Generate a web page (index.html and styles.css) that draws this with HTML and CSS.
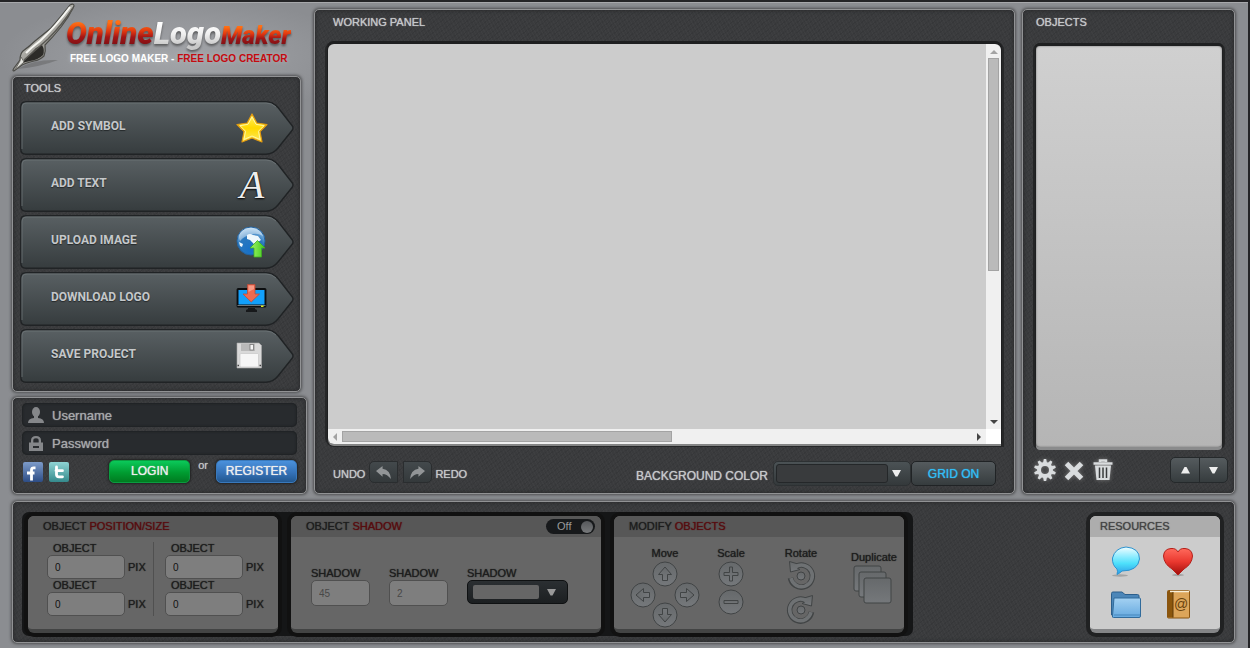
FILE: index.html
```html
<!DOCTYPE html>
<html lang="en">
<head>
<meta charset="utf-8">
<title>Online Logo Maker</title>
<link rel="stylesheet" href="styles.css">
</head>
<body>
<svg class="defs" width="0" height="0" aria-hidden="true">
  <defs>
    <linearGradient id="g-tool" x1="0" y1="0" x2="0" y2="1"><stop offset="0" stop-color="#596063"/><stop offset="1" stop-color="#363c3e"/></linearGradient>
    <linearGradient id="g-ball" x1="0" y1="0" x2="0" y2="1"><stop offset="0" stop-color="#66696b"/><stop offset="1" stop-color="#75787b"/></linearGradient>
    <symbol id="tool-shape" viewBox="0 0 274 54">
      <path d="M6 .7H246Q253 .7 258 6.500L272 24.500Q274 27 272 29.500L258 47Q253 53.200 246 53.200H6Q.8 53.200 .8 48V6Q.8 .7 6 .7Z" fill="url(#g-tool)" stroke="#202325" stroke-width="1.400"/>
      <path d="M2 48V7Q2 2 7 2H246Q252 2 256 6" fill="none" stroke="#6e7679" stroke-width=".8"/>
    </symbol>
  </defs>
</svg>
<div class="page">
  <main class="workspace">
    <div class="side">
      <header class="brand">
        <svg class="pen" viewBox="0 0 66 70" aria-hidden="true">
          <defs><linearGradient id="g-pen" x1="0" y1="0" x2=".8" y2="1"><stop offset="0" stop-color="#e8e8e4"/><stop offset=".5" stop-color="#b3b2ac"/><stop offset="1" stop-color="#5c5b57"/></linearGradient></defs>
          <path d="M5 66Q22 56 46 57Q28 64 5 66Z" fill="#555" opacity=".4"/>
          <path d="M58 2Q62 0 62 3Q57 14 49 24Q41 34 33 42Q34 48 32 53Q28 57 22 58Q14 60 10 62L2 68Q0 68 2 65L8 57Q8 51 11 48Q18 43 23 38Q33 30 39 25Q50 12 58 2Z" fill="url(#g-pen)" stroke="#4b4b47" stroke-width="1.200"/>
          <path d="M30 42Q33 47 31 52Q26 57 18 58Q12 59 9 61L24 45Z" fill="#2c2b28"/>
          <path d="M58 4Q45 22 28 38Q20 44 14 50" fill="none" stroke="#f6f6f2" stroke-width="2"/>
          <path d="M61 5Q50 22 36 36L12 57" fill="none" stroke="#5a5954" stroke-width="1.500"/>
          <path d="M9 54L12 59L3 67L8 58Z" fill="#e5e5e0" stroke="#55534d" stroke-width=".7"/>
        </svg>
        <div class="brand-text">
          <h1 class="logo"><span class="fire">Online</span><span class="silver">Logo</span><span class="fire small">Maker</span></h1>
          <p class="tagline">FREE LOGO MAKER - <span>FREE LOGO CREATOR</span></p>
        </div>
      </header>

      <section class="panel tools">
        <h2 class="title">TOOLS</h2>
        <nav class="tool-list">
          <button class="tool" type="button"><svg class="shape" preserveAspectRatio="none"><use href="#tool-shape"/></svg><span>ADD SYMBOL</span>
            <svg class="icon" viewBox="0 0 32 32"><defs><linearGradient id="g-star" x1="0" y1="0" x2="0" y2="1"><stop offset="0" stop-color="#fff36a"/><stop offset=".5" stop-color="#ffd900"/><stop offset="1" stop-color="#ffe95c"/></linearGradient></defs><path d="M16 2L20.800 11L31 12.500L24 19.500L26 30L16 26L6 30L8 19.500L1 12.500L11.200 11Z" fill="url(#g-star)" stroke="#e39b12" stroke-width="1.200" stroke-linejoin="round"/><path d="M16 5L20 12.300L28 13.700L22.500 19.200L24 27.500L16 24L8 27.500L9.500 19.200L4 13.700L12 12.300Z" fill="none" stroke="#fff7a5" stroke-width="1"/></svg></button>
          <button class="tool" type="button"><svg class="shape" preserveAspectRatio="none"><use href="#tool-shape"/></svg><span>ADD TEXT</span><b class="icon letter" aria-hidden="true">A</b></button>
          <button class="tool" type="button"><svg class="shape" preserveAspectRatio="none"><use href="#tool-shape"/></svg><span>UPLOAD IMAGE</span>
            <svg class="icon" viewBox="0 0 32 32"><defs><radialGradient id="g-globe" cx=".5" cy=".85" r=".9"><stop offset="0" stop-color="#1670c8"/><stop offset=".55" stop-color="#2a78be"/><stop offset="1" stop-color="#c4e2f7"/></radialGradient><linearGradient id="g-up" x1="0" y1="0" x2="1" y2="0"><stop offset="0" stop-color="#a3f56b"/><stop offset="1" stop-color="#3fc91b"/></linearGradient></defs><circle cx="15" cy="15" r="14" fill="url(#g-globe)" stroke="#2262a0"/><path d="M4 7Q9 1 17 2Q25 4 27 10Q20 6 14 9Q8 10 4 15Q2 11 4 7Z" fill="#fff" opacity=".4"/><path d="M11 9Q14 7 17 9L22 10L25 14L22 16L20 21L17 17L14 14L11 13ZM3 16L7 18L6 21L4 20Z" fill="#eef7fc"/><path d="M21.500 14.500L29 22H25.500V31H18V22H14Z" fill="url(#g-up)" stroke="#3fae22" stroke-width=".8"/></svg></button>
          <button class="tool" type="button"><svg class="shape" preserveAspectRatio="none"><use href="#tool-shape"/></svg><span>DOWNLOAD LOGO</span>
            <svg class="icon" viewBox="0 0 32 32"><rect x=".6" y="5" width="29.800" height="19.500" rx="1.500" fill="#0c0e10"/><rect x="2.500" y="7" width="26" height="14.500" fill="#12a0fb"/><path d="M1.500 22.500H29.500" stroke="#70777a"/><rect x="25" y="22.500" width="2.500" height="1.500" fill="#d8ef20"/><path d="M12 25H19V26L21 27V29H10V27L12 26Z" fill="#17191b"/><path d="M11.500 1.500H19V11H23.500L15.200 19L7 11H11.500Z" fill="#f06a50" stroke="#bc4d3a" stroke-width=".8"/><path d="M12.500 2.500H18V6L12.500 9Z" fill="#f89a86"/></svg></button>
          <button class="tool" type="button"><svg class="shape" preserveAspectRatio="none"><use href="#tool-shape"/></svg><span>SAVE PROJECT</span>
            <svg class="icon" viewBox="0 0 32 32"><path d="M1 3H23L25.500 5.500V28H1Z" fill="#d9d9d9" stroke="#a9a9a9" stroke-width=".6"/><rect x="5" y="3.500" width="14" height="7.500" fill="#b9b9b9"/><rect x="14" y="4.500" width="3.500" height="5.500" fill="#f4f4f4" stroke="#777" stroke-width=".8"/><rect x="4" y="13.500" width="18.500" height="13.500" rx="1" fill="#f6f6f6" stroke="#c2c2c2" stroke-width=".6"/><path d="M1.500 25.500H3M23.500 25.500H25" stroke="#444" stroke-width="1.500"/></svg></button>
        </nav>
      </section>

      <form class="panel login" onsubmit="return false">
        <label class="entry"><svg viewBox="0 0 16 17" aria-hidden="true"><ellipse cx="8" cy="5" rx="4" ry="5"/><path d="M0 16Q0 11.500 6 11V9H10V11Q16 11.500 16 16Z"/></svg><input type="text" placeholder="Username" aria-label="Username"></label>
        <label class="entry"><svg viewBox="0 0 16 17" aria-hidden="true"><path d="M1 7.500H3V5.500Q3 1 8 1Q13 1 13 5.500V7.500H15V16H1ZM5.300 7.500H10.700V5.500Q10.700 3.300 8 3.300Q5.300 3.300 5.300 5.500ZM5 11V13H11V11Z" fill-rule="evenodd"/></svg><input type="password" placeholder="Password" aria-label="Password"></label>
        <div class="login-row">
          <a href="#facebook" aria-label="Facebook"><svg viewBox="0 0 20 20"><defs><linearGradient id="g-fb" x1="0" y1="0" x2="0" y2="1"><stop offset="0" stop-color="#7d9bc9"/><stop offset="1" stop-color="#2d4d86"/></linearGradient></defs><rect width="20" height="20" rx="2" fill="url(#g-fb)"/><path d="M12.500 5.800H10.700Q8.500 5.800 8.500 8V18.500M4 11H11.500" fill="none" stroke="#fff" stroke-width="2.800"/></svg></a>
          <a href="#twitter" aria-label="Twitter"><svg viewBox="0 0 20 20"><defs><linearGradient id="g-tw" x1="0" y1="0" x2="0" y2="1"><stop offset="0" stop-color="#8fd4d4"/><stop offset="1" stop-color="#358a8c"/></linearGradient></defs><rect width="20" height="20" rx="2" fill="url(#g-tw)"/><path d="M7.500 5V12.500Q7.500 14.800 10 14.800H13.500M7 8.700H13.500" fill="none" stroke="#fff" stroke-width="2.800" stroke-linecap="round"/></svg></a>
          <button class="btn green" type="submit">LOGIN</button>
          <span class="or">or</span>
          <button class="btn blue" type="button">REGISTER</button>
        </div>
      </form>
    </div>

    <section class="panel working">
      <h2 class="title">WORKING PANEL</h2>
      <div class="canvas">
        <div class="sheet"></div>
        <div class="bar vertical"><i class="arrow up faint"></i><i class="thumb"></i><i class="arrow down"></i></div>
        <div class="bar horizontal"><i class="arrow left faint"></i><i class="thumb"></i><i class="arrow right"></i></div>
        <div class="corner"></div>
      </div>
      <div class="controls">
        <span>UNDO</span>
        <button class="mini first" type="button" aria-label="Undo"><svg viewBox="0 0 18 16"><path d="M1 6.500L8 1V4Q16 5 17 15Q13 9.500 8 9.500V12.500Z"/></svg></button>
        <button class="mini last" type="button" aria-label="Redo"><svg viewBox="0 0 18 16"><path d="M17 6.500L10 1V4Q2 5 1 15Q5 9.500 10 9.500V12.500Z"/></svg></button>
        <span>REDO</span>
        <span class="bg-label">BACKGROUND COLOR</span>
        <button class="picker" type="button" aria-label="Background color"><i class="swatch"></i><svg viewBox="0 0 9 7"><path d="M0 0H9L5.500 6.500H3.500Z"/></svg></button>
        <button class="grid-btn" type="button">GRID ON</button>
      </div>
    </section>

    <section class="panel objects">
      <h2 class="title">OBJECTS</h2>
      <div class="object-list"></div>
      <div class="object-tools">
        <button type="button" aria-label="Settings"><svg viewBox="0 0 22 22"><g fill="#d9dcde"><path id="teeth" d="M9.800 0H12.200L13 4H9ZM9.800 22H12.200L13 18H9Z"/><use href="#teeth" transform="rotate(36 11 11)"/><use href="#teeth" transform="rotate(72 11 11)"/><use href="#teeth" transform="rotate(108 11 11)"/><use href="#teeth" transform="rotate(144 11 11)"/></g><circle cx="11" cy="11" r="6" fill="none" stroke="#d9dcde" stroke-width="4"/></svg></button>
        <button type="button" aria-label="Remove"><svg viewBox="0 0 22 22"><path d="M3.500 4.500L18.500 19.500M18.500 4.500L3.500 19.500" stroke="#d9dcde" stroke-width="5"/></svg></button>
        <button type="button" aria-label="Delete all"><svg viewBox="0 0 22 22"><path d="M1.500 4.500H20.500M8 3V1.500H14V3" fill="none" stroke="#d9dcde" stroke-width="2.500"/><path d="M3 6.500H19L17.500 21H4.500Z" fill="#d9dcde"/><path d="M7.500 8.500V19M11 8.500V19M14.500 8.500V19" stroke="#393b3d" stroke-width="1.500"/></svg></button>
        <div class="order">
          <button type="button" aria-label="Move up"><svg viewBox="0 0 9 7"><path d="M3.500 0H5.500L9 6.500H0Z"/></svg></button>
          <button type="button" aria-label="Move down"><svg viewBox="0 0 9 7"><path d="M0 0H9L5.500 6.500H3.500Z"/></svg></button>
        </div>
      </div>
    </section>
  </main>

  <section class="panel bottom">
    <div class="group">
      <section class="card position">
        <h2>OBJECT <em>POSITION/SIZE</em></h2>
        <div class="position-body">
          <div class="column">
            <label class="field">OBJECT<span class="line"><input type="text" value="0"><small>PIX</small></span></label>
            <label class="field">OBJECT<span class="line"><input type="text" value="0"><small>PIX</small></span></label>
          </div>
          <div class="column">
            <label class="field">OBJECT<span class="line"><input type="text" value="0"><small>PIX</small></span></label>
            <label class="field">OBJECT<span class="line"><input type="text" value="0"><small>PIX</small></span></label>
          </div>
        </div>
      </section>
      <section class="card shadow">
        <h2>OBJECT <em>SHADOW</em><label class="toggle">Off<input type="checkbox"></label></h2>
        <div class="shadow-body">
          <label>SHADOW<input type="text" value="45"></label>
          <label>SHADOW<input type="text" value="2"></label>
          <div class="shade"><span id="shade-label">SHADOW</span><button class="shade-pick" type="button" aria-labelledby="shade-label"><i></i><svg viewBox="0 0 9 7"><path d="M0 0H9L5.500 6.500H3.500Z"/></svg></button></div>
        </div>
      </section>
      <section class="card modify">
        <h2>MODIFY <em>OBJECTS</em></h2>
        <div class="modify-body">
          <div class="act"><span>Move</span>
            <div class="pad">
              <button class="n" type="button" aria-label="Move up"><svg viewBox="0 0 26 26"><circle cx="13" cy="13" r="12"/><path id="arw" d="M13 6L19.500 13.500H15.500V19.500H10.500V13.500H6.500Z"/></svg></button>
              <button class="w" type="button" aria-label="Move left"><svg viewBox="0 0 26 26"><circle cx="13" cy="13" r="12"/><use href="#arw" transform="rotate(-90 13 13)"/></svg></button>
              <button class="e" type="button" aria-label="Move right"><svg viewBox="0 0 26 26"><circle cx="13" cy="13" r="12"/><use href="#arw" transform="rotate(90 13 13)"/></svg></button>
              <button class="s" type="button" aria-label="Move down"><svg viewBox="0 0 26 26"><circle cx="13" cy="13" r="12"/><use href="#arw" transform="rotate(180 13 13)"/></svg></button>
            </div>
          </div>
          <div class="act scale"><span>Scale</span>
            <button type="button" aria-label="Scale up"><svg viewBox="0 0 26 26"><circle cx="13" cy="13" r="12"/><path d="M11.500 6H14.500V11.500H20V14.500H14.500V20H11.500V14.500H6V11.500H11.500Z"/></svg></button>
            <button type="button" aria-label="Scale down"><svg viewBox="0 0 26 26"><circle cx="13" cy="13" r="12"/><path d="M6 11.500H20V14.500H6Z"/></svg></button>
          </div>
          <div class="act rotate"><span>Rotate</span>
            <button type="button" aria-label="Rotate left"><svg viewBox="0 0 30 30"><g id="rot"><path d="M4.500 18A11 11 0 1 0 10 6.500" fill="none" stroke-width="5.500"/><path d="M3.500 1.500L4.500 12L14 9.500L10.500 7.500L12 4Z"/><path d="M5 18.200A10.800 10.800 0 1 0 9.500 7" fill="none" stroke="#6e7173" stroke-width="3.500"/></g><circle cx="15" cy="16" r="4"/></svg></button>
            <button type="button" aria-label="Rotate right"><svg viewBox="0 0 30 30"><use href="#rot" transform="translate(30 0) scale(-1 1)"/><circle cx="15" cy="16" r="4"/></svg></button>
          </div>
          <div class="act duplicate"><span>Duplicate</span>
            <button type="button" aria-label="Duplicate"><svg viewBox="0 0 39 39"><rect x="1" y="1" width="27" height="25" rx="2"/><rect x="6" y="7" width="27" height="25" rx="2"/><rect x="11" y="13" width="27" height="25" rx="2"/></svg></button>
          </div>
        </div>
      </section>
    </div>
    <section class="card resources">
      <h2>RESOURCES</h2>
      <div class="links">
        <a href="#forum" aria-label="Forum"><svg viewBox="0 0 32 32"><defs><linearGradient id="g-bub" x1="0" y1="0" x2="0" y2="1"><stop offset="0" stop-color="#f2fdff"/><stop offset=".35" stop-color="#8eecff"/><stop offset=".6" stop-color="#4de0fb"/><stop offset="1" stop-color="#2b9be6"/></linearGradient></defs><ellipse cx="10" cy="30.500" rx="8" ry="1.200" fill="#888" opacity=".6"/><path d="M16 2Q29.500 3 29.500 14Q28 26 12 26Q10 28 7 29.500Q8 26 7 24Q2 20 2.500 13Q5 3 16 2Z" fill="url(#g-bub)" stroke="#2d93cf"/></svg></a>
        <a href="#favourite" aria-label="Favourite"><svg viewBox="0 0 32 32"><defs><linearGradient id="g-heart" x1="0" y1="0" x2="0" y2="1"><stop offset="0" stop-color="#ff6a5c"/><stop offset=".5" stop-color="#ea382f"/><stop offset="1" stop-color="#a00d0a"/></linearGradient></defs><ellipse cx="16" cy="30" rx="6" ry="1.200" fill="#888" opacity=".6"/><path d="M16 7Q18 3 23 3.500Q30 4 30.500 11Q30 19 22 24L16 30L10 24Q2 19 1.500 11Q2 4 9 3.500Q14 3 16 7Z" fill="url(#g-heart)" stroke="#b5201a"/></svg></a>
        <a href="#files" aria-label="Files"><svg viewBox="0 0 32 32"><defs><linearGradient id="g-fold" x1="0" y1="0" x2="0" y2="1"><stop offset="0" stop-color="#a4d1f2"/><stop offset="1" stop-color="#65a9df"/></linearGradient></defs><path d="M1.500 27V5.500Q1.500 4 3 4H12L15 6.500H27.500Q29 6.500 29 8V27Z" fill="#4c86b8" stroke="#2c5f8c"/><path d="M4 10H29.500Q30.500 10 30.500 11V28Q30.500 29.500 29 29.500H3.500Q2 29.500 2.500 28Z" fill="url(#g-fold)" stroke="#316b9b"/><path d="M4 27H30" stroke="#4687bd"/></svg></a>
        <a href="#contacts" aria-label="Contacts"><svg viewBox="0 0 32 32"><rect x="5.500" y="2.500" width="22" height="27.500" rx="1" fill="#dca55a" stroke="#8a5410"/><path d="M6 3H11V29.500H6Z" fill="#8b560d"/><path d="M8 3.500H27" stroke="#f7eed8" stroke-width="1.500"/><path d="M11 4V29.500" stroke="#5e3a08"/><text x="19" y="21" text-anchor="middle" font-size="14" fill="#6a430c">@</text></svg></a>
      </div>
    </section>
  </section>
</div>
</body>
</html>
```
FILE: styles.css
```css
* { box-sizing: border-box; }
body {
  margin: 0;
  min-height: 100vh;
  background: #8b8d91;
  font-family: "Liberation Sans", Arial, sans-serif;
  font-size: 11px;
  color: #c6c8ca;
}
h1, h2, p { margin: 0; font-weight: normal; }
h2 { font-size: 11px; }
em { font-style: normal; }
button { padding: 0; border: 0; background: none; font: inherit; color: inherit; cursor: pointer; }
input { font: inherit; min-width: 0; }
svg { display: block; }
.defs { position: absolute; }

.page {
  min-height: 100vh;
  padding: 7px 13px 5px 12px;
  border-top: 2px solid #242426;
  border-right: 2px solid #242426;
  box-shadow: inset 0 1px #a7a8ab;
  background: radial-gradient(ellipse 180px 60px at 180px 55px, #a3a5a9 0, transparent 100%);
  display: flex;
  flex-direction: column;
  gap: 7px;
}
.workspace {
  flex: 1;
  display: grid;
  grid-template-columns: 295px minmax(0, 1fr) 213px;
  gap: 7px;
}
.panel {
  border: 1px solid #919294;
  border-radius: 5px;
  box-shadow: 0 0 3px 1px #4c4d4f, inset 0 0 4px #242527;
  background-color: #3a3b3d;
  background-image:
    repeating-linear-gradient(63deg, rgba(255, 255, 255, .02) 0 1px, transparent 1px 3px),
    repeating-linear-gradient(-38deg, rgba(0, 0, 0, .07) 0 1px, transparent 1px 4px);
}
.title { line-height: 14px; text-shadow: 0 0 1px #c6c8ca; }

/* Left column */
.side { display: flex; flex-direction: column; }
.brand { height: 67px; display: flex; }
.pen { width: 66px; height: 70px; margin-top: -6px; flex: none; }
.brand-text { margin-left: -12px; padding-top: 6px; }
.logo {
  display: flex;
  align-items: baseline;
  font: italic 900 31px/38px Roboto, "Liberation Sans", sans-serif;
  filter: drop-shadow(0 2px 1px rgba(50, 50, 50, .6));
}
.logo span { color: transparent; background-clip: text; -webkit-background-clip: text; }
.fire { background-image: linear-gradient(#ff7014 20%, #e33a10 42%, #a31616 58%, #7e1015 80%); }
.silver { background-image: linear-gradient(#fff 20%, #f0f0f0 50%, #c8c8c8 80%); }
.logo .small { font-size: 25px; line-height: 30px; }
.tagline { padding-left: 4px; font-size: 10px; line-height: 12px; font-weight: bold; color: #fff; white-space: nowrap; text-shadow: 0 0 4px #b5b7ba; }
.tagline span { color: #c40b10; }

.tools { margin-right: 6px; padding: 4px 6px 8px 7px; }
.tools .title { padding-left: 4px; }
.tool-list { display: grid; gap: 3px; margin-top: 6px; }
.tool {
  position: relative;
  height: 54px;
  padding: 0 26px 4px 31px;
  display: flex;
  align-items: center;
  justify-content: space-between;
  font: bold 12px/14px Roboto, "Liberation Sans", sans-serif;
  color: #c5c8ca;
  text-shadow: 0 1px 1px #25292b;
}
.tool .shape { position: absolute; inset: 0; width: 100%; height: 100%; }
.tool span, .tool .icon { position: relative; }
.tool .icon { width: 32px; height: 32px; margin-top: 3px; }
.tool .letter { font: italic 40px/32px "Liberation Serif", serif; color: #eee; text-shadow: 0 1px 2px #000, 0 0 1px #000; }

.login { flex: 1; margin-top: 5px; padding: 5px 9px 8px; }
.entry {
  height: 24px;
  margin-bottom: 4px;
  padding-left: 6px;
  display: flex;
  align-items: center;
  gap: 8px;
  border-radius: 5px;
  background: #282b2e;
  box-shadow: inset 0 0 3px #16181a;
}
.entry svg { width: 16px; height: 17px; fill: #85878a; }
.entry input { flex: 1; padding: 0; border: 0; background: none; color: #b0b2b4; font-size: 13px; outline: 0; }
.entry input::placeholder { color: #a6a8aa; opacity: 1; text-shadow: 0 0 1px #a6a8aa; }
.login-row { display: flex; align-items: center; gap: 6px; padding-left: 1px; }
.login-row a svg { width: 20px; height: 20px; margin-top: 2px; }
.btn { width: 81px; height: 23px; border-radius: 5px; font-size: 12px; color: #eee; text-shadow: 0 0 1px #eee; box-shadow: 0 0 2px 1px #222; }
.green { margin-left: auto; background: linear-gradient(#0bc95a, #009c31 55%, #007c20); border: 1px solid #0b9c40; }
.blue { background: linear-gradient(#4a91dc, #3572b8 55%, #22578f); border: 1px solid #3979bc; }
.or { padding: 0 2px 12px; text-shadow: 0 0 1px #aaa; }

/* Centre */
.working { padding: 5px 13px 7px; display: flex; flex-direction: column; }
.working .title { padding-left: 5px; }
.canvas {
  flex: 1;
  margin-top: 15px;
  display: grid;
  grid-template: minmax(0, 1fr) 15px / minmax(0, 1fr) 15px;
  border-radius: 6px 6px 0 6px;
  overflow: hidden;
  box-shadow: 0 2px 0 0 #848585, 0 -2px 0 1px #1e1f20, 0 0 0 3px #262728;
}
.sheet { background: #ccc; }
.corner { background: #fff; }
.bar { background: #f0f0f0; display: flex; align-items: center; }
.bar .thumb { background: #bababa; border: 1px solid #a3a3a3; }
.vertical { flex-direction: column; padding: 6px 0 5px; }
.vertical .thumb { width: 11px; height: 57%; margin: 4px 0 auto; }
.horizontal { padding: 0 5px; }
.horizontal .thumb { width: 51%; height: 11px; margin: 0 auto 0 5px; }
.arrow { border: 4px solid transparent; flex: none; color: #444; }
.faint { color: #a3a3a3; }
.up { border-top: 0; border-bottom-color: currentColor; }
.down { border-bottom: 0; border-top-color: currentColor; }
.left { border-left: 0; border-right-color: currentColor; }
.right { border-right: 0; border-left-color: currentColor; }

.controls { display: flex; align-items: center; margin-top: 17px; padding: 0 5px; height: 25px; text-shadow: 0 0 1px #c6c8ca; }
.mini { width: 29px; height: 22px; margin: 0 3px 3px 2px; display: grid; place-items: center; border: 1px solid #2a2d2f; background: linear-gradient(#43494c, #34393b); }
.mini svg { width: 17px; height: 15px; fill: #929597; }
.mini.first { margin-left: 4px; border-radius: 5px 0 0 5px; }
.mini.last { border-radius: 0 5px 5px 0; }
.bg-label { margin: 4px 5px 0 auto; font-size: 12px; }
.picker { width: 138px; height: 25px; padding: 2px 9px 2px 2px; display: flex; align-items: center; justify-content: space-between; border: 1px solid #2d3133; border-radius: 5px; background: linear-gradient(#4b5255, #34393b); }
.swatch { width: 112px; height: 19px; border: 1px solid #242729; border-radius: 3px; background: #393b3d; }
.picker svg, .order svg { width: 9px; height: 7px; fill: #eee; }
.grid-btn { width: 85px; height: 25px; border: 1px solid #202325; border-radius: 5px; background: linear-gradient(#555b5e, #363c3e); font-size: 12px; color: #32bdf5; text-shadow: 0 0 1px #32bdf5; }

/* Right column */
.objects { padding: 5px 12px 10px 13px; display: flex; flex-direction: column; }
.object-list { flex: 1; margin-top: 17px; border-radius: 4px; background: linear-gradient(#d0d0d0, #b5b5b5); box-shadow: inset 0 0 2px #666, 0 3px 0 0 #8a8b8c, 0 -2px 0 1px #1f2021, 0 0 0 3px #242526; }
.object-tools { display: flex; align-items: center; gap: 7px; margin: 10px -6px 0 -2px; }
.object-tools > button svg { width: 22px; height: 22px; filter: drop-shadow(0 0 2px #777); }
.order { display: flex; margin-left: auto; border: 1px solid #25292b; border-radius: 5px; background: linear-gradient(#555b5e, #363c3e); }
.order button { width: 28px; height: 24px; display: grid; place-items: center; }
.order button + button { border-left: 1px solid #25292b; }

/* Bottom strip */
.bottom { display: flex; justify-content: space-between; align-items: flex-start; padding: 10px 14px 6px 9px; }
.group { display: flex; gap: 13px; padding: 4px 9px 3px 6px; border-radius: 7px; background: #151617; }
.card { min-height: 117px; border-radius: 6px; overflow: hidden; background: #666; border-bottom: 4px solid #434444; box-shadow: 0 0 0 4px #111; color: #1d1d1d; }
.card h2 { height: 21px; padding-left: 15px; line-height: 20px; background: #575757; text-shadow: 0 0 1px #1d1d1d; display: flex; gap: 3px; }
.card em { color: #560c0f; text-shadow: 0 0 1px #560c0f; }
.card label, .card span { text-shadow: 0 0 1px #1d1d1d; }
.position { width: 250px; }
.position-body { display: flex; padding: 5px 0 0 19px; }
.column { width: 106px; }
.column + .column { padding-left: 11px; width: 118px; border-left: 1px solid #505050; }
.field { display: block; line-height: 13px; text-indent: 6px; }
.line { display: flex; align-items: center; gap: 3px; text-indent: 0; }
.line small { font-size: 11px; }
.card input[type="text"] { width: 78px; height: 24px; padding: 0 7px; border: 1px solid #505050; border-radius: 5px; background: #7e7e7e; color: #111; font-size: 10px; flex: none; }
.shadow { width: 310px; }
.card .toggle { width: 49px; height: 15px; margin: 3px 6px 0 auto; padding: 0 2px 0 11px; display: flex; align-items: center; justify-content: space-between; border-radius: 8px; background: #17191b; color: #999; line-height: 15px; text-shadow: none; }
.toggle input { appearance: none; width: 12px; height: 12px; margin: 0; border-radius: 50%; background: linear-gradient(#56585b, #77797b); }
.shadow-body { display: flex; gap: 20px; padding: 30px 0 0 20px; line-height: 13px; }
.shadow-body label { display: flex; flex-direction: column; width: 58px; }
.card .shadow-body input { width: 59px; height: 26px; color: #484848; }
.shade-pick { width: 101px; height: 24px; padding: 0 11px 0 5px; display: flex; align-items: center; justify-content: space-between; border: 1px solid #0f1112; border-radius: 5px; background: linear-gradient(#2b2f32, #1c1f21); }
.shade-pick i { width: 66px; height: 14px; border-radius: 2px; background: #666; }
.shade-pick svg { width: 9px; height: 7px; fill: #999; }
.modify { width: 290px; }
.modify-body { display: flex; padding: 9px 0 0 16px; line-height: 14px; }
.act { display: flex; flex-direction: column; align-items: center; }
.act svg { width: 26px; height: 26px; fill: url(#g-ball); stroke: #414445; }
.act:first-child { width: 70px; }
.pad { display: grid; grid-template: 21px 20px 26px / 22px 22px 26px; margin-top: 1px; }
.pad button { width: 26px; height: 26px; }
.n { grid-area: 1 / 2; }
.w { grid-area: 2 / 1; }
.e { grid-area: 2 / 3; }
.s { grid-area: 3 / 2; }
.scale { width: 30px; margin-left: 16px; gap: 2px; }
.scale button:first-of-type { margin-top: -1px; }
.rotate { width: 34px; margin-left: 38px; gap: 4px; }
.rotate button:first-of-type { margin-top: -4px; }
.rotate svg { width: 30px; height: 30px; }
.duplicate { width: 48px; margin: 4px 0 0 32px; }
.duplicate svg { width: 39px; height: 39px; margin: 1px 4px 0 0; }
.resources { width: 130px; margin-top: 4px; background: #ccc; border-bottom-color: #848587; box-shadow: 0 0 0 4px #202122; color: #444; }
.resources h2 { padding-left: 10px; background: #adadad; text-shadow: 0 0 1px #444; }
.links { display: grid; grid-template-columns: 32px 32px; gap: 11px 20px; padding: 8px 0 5px 20px; }
.links svg { width: 32px; height: 32px; }
```
